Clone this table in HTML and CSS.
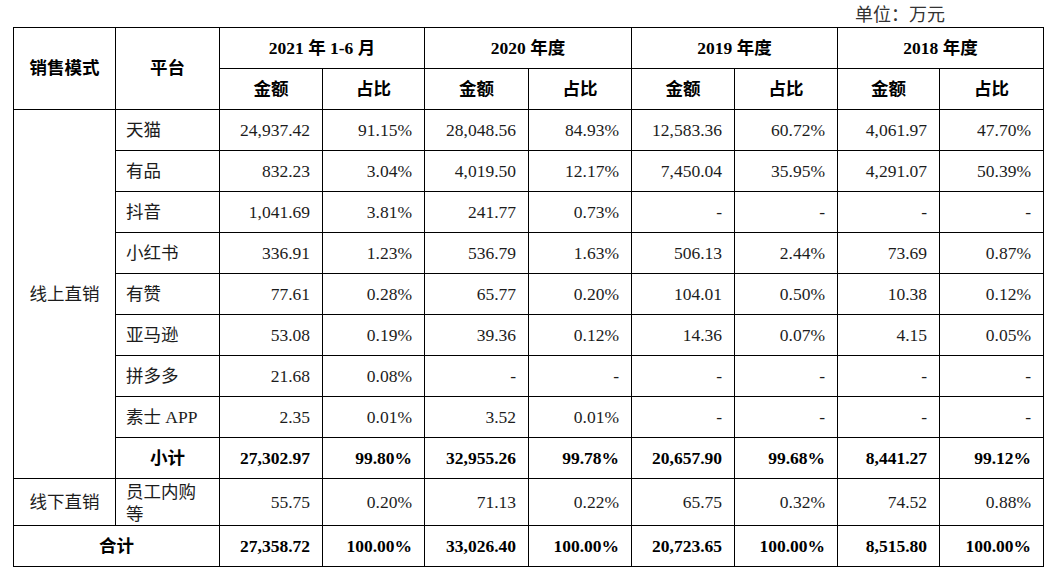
FILE: index.html
```html
<!DOCTYPE html>
<html lang="zh">
<head>
<meta charset="utf-8">
<title>销售模式</title>
<link rel="stylesheet" href="styles.css">
</head>
<body>
<div class="page">
  <div class="unit">单位：万元</div>
  <table class="sales">
    <colgroup>
      <col class="c1"><col class="c2"><col class="c3"><col class="c4"><col class="c5"><col class="c6"><col class="c7"><col class="c8"><col class="c9"><col class="c10">
    </colgroup>
    <thead>
      <tr class="hr">
        <th rowspan="2">销售模式</th>
        <th rowspan="2">平台</th>
        <th colspan="2">2021 年 1-6 月</th>
        <th colspan="2">2020 年度</th>
        <th colspan="2">2019 年度</th>
        <th colspan="2">2018 年度</th>
      </tr>
      <tr class="hr">
        <th>金额</th><th>占比</th><th>金额</th><th>占比</th><th>金额</th><th>占比</th><th>金额</th><th>占比</th>
      </tr>
    </thead>
    <tbody>
      <tr class="r">
        <td rowspan="9" class="mode">线上直销</td>
        <td class="plat">天猫</td>
        <td class="n">24,937.42</td><td class="n">91.15%</td><td class="n">28,048.56</td><td class="n">84.93%</td><td class="n">12,583.36</td><td class="n">60.72%</td><td class="n">4,061.97</td><td class="n">47.70%</td>
      </tr>
      <tr class="r">
        <td class="plat">有品</td>
        <td class="n">832.23</td><td class="n">3.04%</td><td class="n">4,019.50</td><td class="n">12.17%</td><td class="n">7,450.04</td><td class="n">35.95%</td><td class="n">4,291.07</td><td class="n">50.39%</td>
      </tr>
      <tr class="r">
        <td class="plat">抖音</td>
        <td class="n">1,041.69</td><td class="n">3.81%</td><td class="n">241.77</td><td class="n">0.73%</td><td class="n">-</td><td class="n">-</td><td class="n">-</td><td class="n">-</td>
      </tr>
      <tr class="r">
        <td class="plat">小红书</td>
        <td class="n">336.91</td><td class="n">1.23%</td><td class="n">536.79</td><td class="n">1.63%</td><td class="n">506.13</td><td class="n">2.44%</td><td class="n">73.69</td><td class="n">0.87%</td>
      </tr>
      <tr class="r">
        <td class="plat">有赞</td>
        <td class="n">77.61</td><td class="n">0.28%</td><td class="n">65.77</td><td class="n">0.20%</td><td class="n">104.01</td><td class="n">0.50%</td><td class="n">10.38</td><td class="n">0.12%</td>
      </tr>
      <tr class="r">
        <td class="plat">亚马逊</td>
        <td class="n">53.08</td><td class="n">0.19%</td><td class="n">39.36</td><td class="n">0.12%</td><td class="n">14.36</td><td class="n">0.07%</td><td class="n">4.15</td><td class="n">0.05%</td>
      </tr>
      <tr class="r">
        <td class="plat">拼多多</td>
        <td class="n">21.68</td><td class="n">0.08%</td><td class="n">-</td><td class="n">-</td><td class="n">-</td><td class="n">-</td><td class="n">-</td><td class="n">-</td>
      </tr>
      <tr class="r">
        <td class="plat">素士 APP</td>
        <td class="n">2.35</td><td class="n">0.01%</td><td class="n">3.52</td><td class="n">0.01%</td><td class="n">-</td><td class="n">-</td><td class="n">-</td><td class="n">-</td>
      </tr>
      <tr class="r sum">
        <td class="label">小计</td>
        <td class="n">27,302.97</td><td class="n">99.80%</td><td class="n">32,955.26</td><td class="n">99.78%</td><td class="n">20,657.90</td><td class="n">99.68%</td><td class="n">8,441.27</td><td class="n">99.12%</td>
      </tr>
      <tr class="r tall">
        <td class="mode">线下直销</td>
        <td class="plat wrap">员工内购等</td>
        <td class="n">55.75</td><td class="n">0.20%</td><td class="n">71.13</td><td class="n">0.22%</td><td class="n">65.75</td><td class="n">0.32%</td><td class="n">74.52</td><td class="n">0.88%</td>
      </tr>
      <tr class="r sum">
        <td colspan="2" class="label">合计</td>
        <td class="n">27,358.72</td><td class="n">100.00%</td><td class="n">33,026.40</td><td class="n">100.00%</td><td class="n">20,723.65</td><td class="n">100.00%</td><td class="n">8,515.80</td><td class="n">100.00%</td>
      </tr>
    </tbody>
  </table>
</div>
</body>
</html>
```

FILE: styles.css
```css
html, body {
  margin: 0;
  padding: 0;
  background: #fff;
}

body {
  font-family: "Liberation Serif", "Noto Sans CJK SC", serif;
  color: #1c1c1c;
}

.page {
  padding-left: 13px;
  width: 1030px;
}

.unit {
  height: 27px;
  line-height: 30px;
  text-align: right;
  padding-right: 98px;
  font-size: 18px;
  color: #333;
}

.sales {
  border-collapse: collapse;
  table-layout: fixed;
  width: 1030px;
  font-size: 17.5px;
}

.c1 { width: 102px; }
.c2 { width: 104px; }
.c3 { width: 103px; }
.c4 { width: 102px; }
.c5 { width: 104px; }
.c6 { width: 103px; }
.c7 { width: 103px; }
.c8 { width: 103px; }
.c9 { width: 102px; }
.c10 { width: 104px; }

.sales th,
.sales td {
  border: 1px solid #000;
  padding: 0 12px 0 10px;
  vertical-align: middle;
  line-height: 1.4;
}

.sales th {
  font-weight: bold;
  color: #000;
  text-align: center;
  padding: 0;
}

.hr { height: 41px; }
.r { height: 41px; }
.tall { height: 47px; }

.n {
  text-align: right;
}

.mode {
  text-align: center;
  padding: 0 !important;
}

.plat {
  text-align: left;
}

.wrap {
  line-height: 22px !important;
  padding-top: 1px !important;
}

.sum td {
  font-weight: bold;
  color: #000;
}

.label {
  text-align: center;
  padding: 0 !important;
}
```
